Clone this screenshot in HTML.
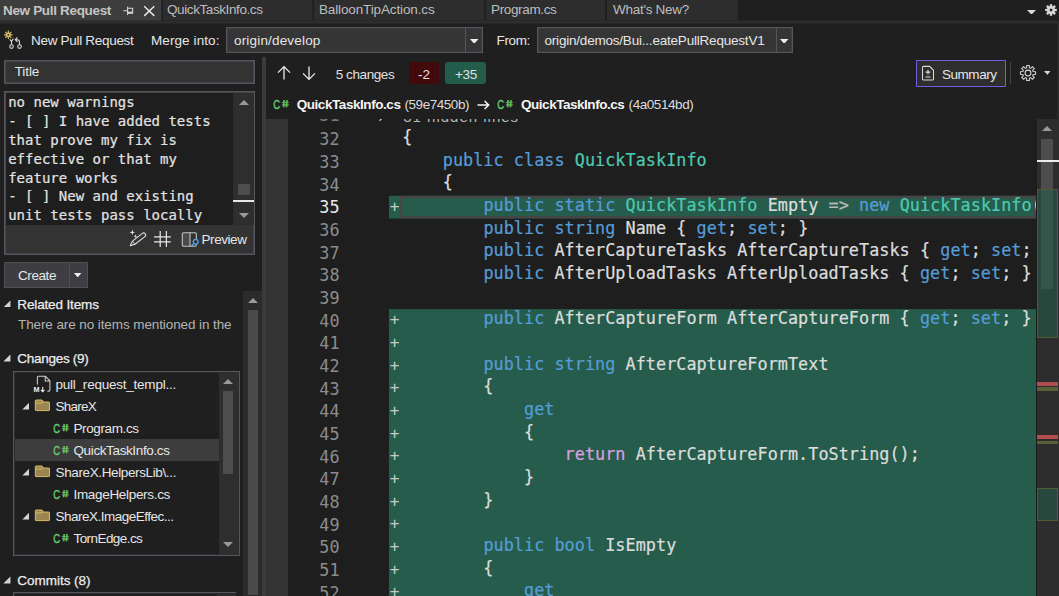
<!DOCTYPE html>
<html lang="en"><head><meta charset="utf-8"><title>New Pull Request</title><style>
html,body{margin:0;padding:0}
body{width:1059px;height:596px;overflow:hidden;background:#1f1f1f;position:relative;font-family:"Liberation Sans",sans-serif;-webkit-font-smoothing:antialiased}
.a{position:absolute;display:block}
.t{position:absolute;white-space:pre;line-height:20px;font-family:"Liberation Sans",sans-serif}
.m{position:absolute;white-space:pre;font-family:"DejaVu Sans Mono","Liberation Mono",monospace}
.ln{left:0;width:73.6px;text-align:right;font-size:16.8px;line-height:22.66px;letter-spacing:0.011px}
.cl{left:95.55px;font-size:16.8px;line-height:22.66px;letter-spacing:0.049px;color:#dcdcdc;-webkit-text-stroke:0.22px currentColor}
</style></head>
<body>
<svg class="a" style="left:0;top:0" width="1059" height="25" viewBox="0 0 1059 25"><rect x="0" y="20.6" width="1057.7" height="3" fill="#2d2d2d"/><rect x="0" y="0" width="161.3" height="20.5" fill="#3d3d3d"/><rect x="163" y="0" width="149.4" height="20.4" fill="#2d2d2d"/><rect x="314.2" y="0" width="170.1" height="20.4" fill="#2d2d2d"/><rect x="486.1" y="0" width="119.1" height="20.4" fill="#2d2d2d"/><rect x="607" y="0" width="130.8" height="20.4" fill="#2d2d2d"/></svg>
<span class="t" style="left:3.00px;top:0.93px;font-size:13.5px;letter-spacing:-0.330px;color:#c4c4c4;font-weight:bold;">New Pull Request</span>
<span class="t" style="left:167.00px;top:0.23px;font-size:13.5px;letter-spacing:-0.408px;color:#bdbdbd;">QuickTaskInfo.cs</span>
<span class="t" style="left:319.00px;top:0.23px;font-size:13.5px;letter-spacing:-0.135px;color:#bdbdbd;">BalloonTipAction.cs</span>
<span class="t" style="left:491.00px;top:0.23px;font-size:13.5px;letter-spacing:-0.352px;color:#bdbdbd;">Program.cs</span>
<span class="t" style="left:613.00px;top:0.23px;font-size:13.5px;letter-spacing:-0.282px;color:#bdbdbd;">What&#x27;s New?</span>
<svg class="a" style="left:122px;top:5px" width="12" height="12" viewBox="0 0 12 12"><path d="M1.3 5.8H5.6M5.6 1.8V10M5.6 3.2H10.6V8.2H5.6" fill="none" stroke="#d4d4d4" stroke-width="1.1"/><path d="M5.6 7.5H10.6" stroke="#d4d4d4" stroke-width="1.7"/></svg>
<svg class="a" style="left:143px;top:5px" width="13" height="12" viewBox="0 0 13 12"><path d="M1.2 1.3L11.3 10.9M11.3 1.3L1.2 10.9" fill="none" stroke="#e8e8e8" stroke-width="1.45"/></svg>
<svg class="a" style="left:1026.5px;top:9.7px" width="9" height="4.6" viewBox="0 0 9 4.6"><path d="M0 0H9L4.5 4.6Z" fill="#d8d8d8"/></svg>
<svg class="a" style="left:1045px;top:4px" width="12" height="12" viewBox="-6 -6 12 12"><g fill="#d8d8d8"><rect x="-1.15" y="-5.8" width="2.3" height="11.6" transform="rotate(0)"/><rect x="-1.15" y="-5.8" width="2.3" height="11.6" transform="rotate(45)"/><rect x="-1.15" y="-5.8" width="2.3" height="11.6" transform="rotate(90)"/><rect x="-1.15" y="-5.8" width="2.3" height="11.6" transform="rotate(135)"/><circle r="3.9"/></g><rect x="-1.25" y="-1.25" width="2.5" height="2.5" fill="#1f1f1f"/></svg>
<div class="a" style="left:1056.8px;top:21px;width:2.2000000000000455px;height:98px;background:#2a2a2a;"></div>
<span class="t" style="left:31.00px;top:31.13px;font-size:13.5px;letter-spacing:-0.300px;color:#e6e6e6;">New Pull Request</span>
<span class="t" style="left:151.00px;top:31.13px;font-size:13.5px;letter-spacing:0.088px;color:#e6e6e6;">Merge into:</span>
<div class="a" style="left:226px;top:26.7px;width:257px;height:26.400000000000002px;background:#353535;box-shadow:inset 0 0 0 1.3px #56555f;"></div>
<div class="a" style="left:465px;top:28px;width:1px;height:24px;background:#56545e;"></div>
<span class="t" style="left:234.00px;top:30.63px;font-size:13.5px;letter-spacing:0.174px;color:#e6e6e6;">origin/develop</span>
<svg class="a" style="left:470.1px;top:38.6px" width="8.4" height="4.8" viewBox="0 0 8.4 4.8"><path d="M0 0H8.4L4.2 4.8Z" fill="#f0f0f0"/></svg>
<span class="t" style="left:496.50px;top:31.13px;font-size:13.5px;letter-spacing:-0.349px;color:#e6e6e6;">From:</span>
<div class="a" style="left:537px;top:26.7px;width:256.29999999999995px;height:26.400000000000002px;background:#353535;box-shadow:inset 0 0 0 1.3px #56555f;"></div>
<div class="a" style="left:776px;top:28px;width:1px;height:24px;background:#56545e;"></div>
<span class="t" style="left:544.50px;top:30.63px;font-size:13.5px;letter-spacing:-0.205px;color:#e6e6e6;">origin/demos/Bui...eatePullRequestV1</span>
<svg class="a" style="left:780.3px;top:38.6px" width="8.4" height="4.8" viewBox="0 0 8.4 4.8"><path d="M0 0H8.4L4.2 4.8Z" fill="#f0f0f0"/></svg>
<svg class="a" style="left:0px;top:26px" width="32" height="30" viewBox="0 0 32 30"><g stroke="#dcc06e" stroke-width="1.15" fill="none"><path d="M8.3 4.5V13.1M4 8.8H12.6M5.3 5.8L11.3 11.8M11.3 5.8L5.3 11.8"/></g><circle cx="8.3" cy="8.8" r="2.3" fill="#dcc06e"/><circle cx="8.3" cy="8.8" r="0.9" fill="#2a2618"/><g stroke="#dadada" stroke-width="1.1" fill="none"><circle cx="11.5" cy="20.6" r="1.8"/><circle cx="19.5" cy="20.6" r="1.8"/><path d="M11.5 18.8V15.2M11.5 15.4L9.7 13.3M11.5 15.4L13.4 12.5M19.5 18.8V16.2Q19.5 13.7 17.3 13.7H15.6M17.4 11.4L15.3 13.7L17.4 15.8"/></g></svg>
<div class="a" style="left:4px;top:60px;width:251.4px;height:24.200000000000003px;background:#333333;box-shadow:inset 0 0 0 1.6px #56555f;"></div>
<span class="t" style="left:14.70px;top:61.63px;font-size:13.5px;letter-spacing:-0.101px;color:#e6e6e6;">Title</span>
<div class="a" style="left:4px;top:91px;width:251.4px;height:164.4px;background:#333333;box-shadow:inset 0 0 0 1.6px #56555f;"></div>
<div class="a" style="left:5.6px;top:92.6px;width:227.4px;height:132.4px;background:#1e1e1e;"></div>
<div class="a" style="left:233px;top:92.6px;width:20.80000000000001px;height:132.4px;background:#2e2e2e;"></div>
<span class="m" style="left:8.2px;top:92.90px;font-size:14px;line-height:19px;color:#e2e2e2;letter-spacing:0.005px;-webkit-text-stroke:0.2px currentColor">no new warnings</span>
<span class="m" style="left:8.2px;top:111.80px;font-size:14px;line-height:19px;color:#e2e2e2;letter-spacing:0.005px;-webkit-text-stroke:0.2px currentColor">- [ ] I have added tests</span>
<span class="m" style="left:8.2px;top:130.70px;font-size:14px;line-height:19px;color:#e2e2e2;letter-spacing:0.005px;-webkit-text-stroke:0.2px currentColor">that prove my fix is</span>
<span class="m" style="left:8.2px;top:149.60px;font-size:14px;line-height:19px;color:#e2e2e2;letter-spacing:0.005px;-webkit-text-stroke:0.2px currentColor">effective or that my</span>
<span class="m" style="left:8.2px;top:168.50px;font-size:14px;line-height:19px;color:#e2e2e2;letter-spacing:0.005px;-webkit-text-stroke:0.2px currentColor">feature works</span>
<span class="m" style="left:8.2px;top:187.40px;font-size:14px;line-height:19px;color:#e2e2e2;letter-spacing:0.005px;-webkit-text-stroke:0.2px currentColor">- [ ] New and existing</span>
<span class="m" style="left:8.2px;top:206.30px;font-size:14px;line-height:19px;color:#e2e2e2;letter-spacing:0.005px;-webkit-text-stroke:0.2px currentColor">unit tests pass locally</span>
<svg class="a" style="left:238.6px;top:99.5px" width="10" height="5" viewBox="0 0 10 5"><path d="M0 5H10L5.0 0Z" fill="#999999"/></svg>
<svg class="a" style="left:238.6px;top:212.8px" width="10" height="5" viewBox="0 0 10 5"><path d="M0 0H10L5.0 5Z" fill="#999999"/></svg>
<div class="a" style="left:237.7px;top:184px;width:12.300000000000011px;height:11px;background:#4d4d4d;"></div>
<div class="a" style="left:233px;top:200px;width:21px;height:2.3000000000000114px;background:#e8e8e8;"></div>
<svg class="a" style="left:128px;top:229px" width="20" height="20" viewBox="0 0 20 20"><path d="M2.3 16.6L4.5 12.1L14.36 4.43A2 2 0 0 1 16.84 7.57L7 15.3Z" fill="none" stroke="#dcdcdc" stroke-width="1.1" stroke-linejoin="round"/><path d="M4.6 12.2L6.9 15.2" fill="none" stroke="#dcdcdc" stroke-width="0.9"/><path d="M4.30 0.60L4.95 2.75L7.10 3.40L4.95 4.05L4.30 6.20L3.65 4.05L1.50 3.40L3.65 2.75Z" fill="#e6e6e6"/><path d="M7.50 5.20L7.97 6.73L9.50 7.20L7.97 7.67L7.50 9.20L7.03 7.67L5.50 7.20L7.03 6.73Z" fill="#e6e6e6"/></svg>
<svg class="a" style="left:154px;top:231px" width="17" height="16" viewBox="0 0 17 16"><path d="M6.2 0V16M12.4 0V16M0 5.8H16.8M0 10.8H16.8" fill="none" stroke="#e8e8e8" stroke-width="1.2"/></svg>
<svg class="a" style="left:181px;top:231px" width="19" height="17" viewBox="0 0 19 17"><g fill="none"><rect x="1.8" y="2.2" width="7.2" height="12.6" fill="#4a4a4a"/><rect x="1.3" y="1.75" width="14" height="13.5" rx="1.3" stroke="#c8c8c8" stroke-width="1.05"/><path d="M9 1.75V15.25" stroke="#c8c8c8" stroke-width="1.05"/><circle cx="14.7" cy="10.7" r="2.4" fill="#333333" stroke="#4aa3f0" stroke-width="1.3"/><path d="M13 12.5L10 15.5" stroke="#4aa3f0" stroke-width="1.5"/></g></svg>
<span class="t" style="left:201.50px;top:229.63px;font-size:13.5px;letter-spacing:-0.431px;color:#e6e6e6;">Preview</span>
<div class="a" style="left:4px;top:262px;width:84px;height:26px;background:#3d3d42;box-shadow:inset 0 0 0 1px #4f4f55;"></div>
<div class="a" style="left:69px;top:263px;width:1px;height:24px;background:#4f4f55;"></div>
<span class="t" style="left:18.00px;top:266.33px;font-size:13.5px;letter-spacing:-0.420px;color:#e6e6e6;">Create</span>
<svg class="a" style="left:74.3px;top:272.6px" width="7.4" height="4.4" viewBox="0 0 7.4 4.4"><path d="M0 0H7.4L3.7 4.4Z" fill="#f0f0f0"/></svg>
<div class="a" style="left:243px;top:291px;width:19px;height:305px;background:#2b2b2b;"></div>
<svg class="a" style="left:247.8px;top:298.3px" width="10" height="5" viewBox="0 0 10 5"><path d="M0 5H10L5.0 0Z" fill="#999999"/></svg>
<div class="a" style="left:248px;top:310px;width:10px;height:285px;background:#4a4a4a;"></div>
<div class="a" style="left:262px;top:56.5px;width:4px;height:539.5px;background:#3a3a3a;"></div>
<svg class="a" style="left:3px;top:299.5px" width="7.8" height="7.8" viewBox="0 0 8 8"><path d="M7.6 0.4V7.6H0.4Z" fill="#d4d4d4"/></svg>
<span class="t" style="left:17.30px;top:294.53px;font-size:13.5px;letter-spacing:-0.138px;color:#ececec;-webkit-text-stroke:0.25px currentColor;">Related Items</span>
<span class="t" style="left:18.00px;top:315.33px;font-size:13.5px;letter-spacing:-0.096px;color:#b4b4b4;">There are no items mentioned in the</span>
<svg class="a" style="left:3px;top:354.09999999999997px" width="7.8" height="7.8" viewBox="0 0 8 8"><path d="M7.6 0.4V7.6H0.4Z" fill="#d4d4d4"/></svg>
<span class="t" style="left:17.30px;top:348.93px;font-size:13.5px;letter-spacing:-0.281px;color:#ececec;-webkit-text-stroke:0.25px currentColor;">Changes (9)</span>
<svg class="a" style="left:3px;top:576.3px" width="7.8" height="7.8" viewBox="0 0 8 8"><path d="M7.6 0.4V7.6H0.4Z" fill="#d4d4d4"/></svg>
<span class="t" style="left:17.30px;top:571.13px;font-size:13.5px;letter-spacing:-0.027px;color:#ececec;-webkit-text-stroke:0.25px currentColor;">Commits (8)</span>
<div class="a" style="left:13.2px;top:591.8px;width:223.3px;height:8.200000000000045px;background:#1f1f1f;box-shadow:inset 0 0 0 1.3px #56555f;"></div>
<div class="a" style="left:217px;top:593px;width:18.5px;height:7px;background:#2b2b2b;"></div>
<div class="a" style="left:13.2px;top:370.5px;width:226.5px;height:185.5px;background:#1f1f1f;box-shadow:inset 0 0 0 1.3px #56555f;"></div>
<div class="a" style="left:219px;top:371.5px;width:19.5px;height:183.0px;background:#2e2e2e;"></div>
<svg class="a" style="left:223.3px;top:379.3px" width="10" height="5" viewBox="0 0 10 5"><path d="M0 5H10L5.0 0Z" fill="#999999"/></svg>
<svg class="a" style="left:223.3px;top:541.7px" width="10" height="5" viewBox="0 0 10 5"><path d="M0 0H10L5.0 5Z" fill="#999999"/></svg>
<div class="a" style="left:223.3px;top:391px;width:9.699999999999989px;height:83px;background:#4d4d4d;"></div>
<div class="a" style="left:15px;top:439px;width:204.4px;height:22px;background:#3d3d3d;"></div>
<span class="t" style="left:55.50px;top:374.63px;font-size:13.5px;letter-spacing:-0.230px;color:#e6e6e6;">pull_request_templ...</span>
<svg class="a" style="left:33px;top:375.0px" width="19" height="19" viewBox="0 0 19 19"><path d="M4.4 9.6V2.4Q4.4 1.3 5.5 1.3H12.4L16.9 5.8V15Q16.9 16.1 15.8 16.1H14.4M12.2 1.5V6H16.7" fill="none" stroke="#cfcfcf" stroke-width="1.05"/><text x="0.6" y="17.4" font-family="Liberation Sans, sans-serif" font-size="7.2" font-weight="bold" fill="#f0f0f0">M</text><path d="M9.7 12V16.6M7.9 14.9L9.7 16.8L11.5 14.9" fill="none" stroke="#f0f0f0" stroke-width="1.1"/></svg>
<span class="t" style="left:55.50px;top:396.73px;font-size:13.5px;letter-spacing:-0.755px;color:#e6e6e6;">ShareX</span>
<svg class="a" style="left:21.6px;top:401.9px" width="7.8" height="7.8" viewBox="0 0 8 8"><path d="M7.6 0.4V7.6H0.4Z" fill="#d4d4d4"/></svg>
<svg class="a" style="left:34.4px;top:398.90000000000003px" width="16.6" height="12.8" viewBox="0 0 17 14"><path d="M0.9 1.9Q0.9 1.1 1.7 1.1H8.2L9.8 3.3H15.6Q16.4 3.3 16.4 4.1V11.9Q16.4 12.7 15.6 12.7H1.7Q0.9 12.7 0.9 11.9Z" fill="#9c8650" stroke="#e4c46e" stroke-width="1"/><path d="M1 4.4H7.6L9.6 3.3" fill="none" stroke="#e4c46e" stroke-width="0.9"/></svg>
<span class="t" style="left:73.50px;top:418.83px;font-size:13.5px;letter-spacing:-0.382px;color:#e6e6e6;">Program.cs</span>
<svg class="a" style="left:52.8px;top:421.7px" width="18" height="13" viewBox="0 0 18 13"><text x="0.2" y="10.75" font-family="Liberation Sans, sans-serif" font-size="12.5" textLength="6.9" lengthAdjust="spacingAndGlyphs" fill="#6ac76e" stroke="#6ac76e" stroke-width="0.4">C</text><text x="0" y="0" transform="translate(9.5 9.15) skewX(11)" font-family="Liberation Sans, sans-serif" font-size="9.9" font-weight="bold" textLength="6.9" lengthAdjust="spacingAndGlyphs" fill="#6ac76e" stroke="#6ac76e" stroke-width="0.35">#</text></svg>
<span class="t" style="left:73.50px;top:440.83px;font-size:13.5px;letter-spacing:-0.377px;color:#e6e6e6;">QuickTaskInfo.cs</span>
<svg class="a" style="left:52.8px;top:443.7px" width="18" height="13" viewBox="0 0 18 13"><text x="0.2" y="10.75" font-family="Liberation Sans, sans-serif" font-size="12.5" textLength="6.9" lengthAdjust="spacingAndGlyphs" fill="#6ac76e" stroke="#6ac76e" stroke-width="0.4">C</text><text x="0" y="0" transform="translate(9.5 9.15) skewX(11)" font-family="Liberation Sans, sans-serif" font-size="9.9" font-weight="bold" textLength="6.9" lengthAdjust="spacingAndGlyphs" fill="#6ac76e" stroke="#6ac76e" stroke-width="0.35">#</text></svg>
<span class="t" style="left:55.50px;top:462.93px;font-size:13.5px;letter-spacing:-0.372px;color:#e6e6e6;">ShareX.HelpersLib\...</span>
<svg class="a" style="left:21.6px;top:468.09999999999997px" width="7.8" height="7.8" viewBox="0 0 8 8"><path d="M7.6 0.4V7.6H0.4Z" fill="#d4d4d4"/></svg>
<svg class="a" style="left:34.4px;top:465.1px" width="16.6" height="12.8" viewBox="0 0 17 14"><path d="M0.9 1.9Q0.9 1.1 1.7 1.1H8.2L9.8 3.3H15.6Q16.4 3.3 16.4 4.1V11.9Q16.4 12.7 15.6 12.7H1.7Q0.9 12.7 0.9 11.9Z" fill="#9c8650" stroke="#e4c46e" stroke-width="1"/><path d="M1 4.4H7.6L9.6 3.3" fill="none" stroke="#e4c46e" stroke-width="0.9"/></svg>
<span class="t" style="left:73.50px;top:485.13px;font-size:13.5px;letter-spacing:-0.319px;color:#e6e6e6;">ImageHelpers.cs</span>
<svg class="a" style="left:52.8px;top:488px" width="18" height="13" viewBox="0 0 18 13"><text x="0.2" y="10.75" font-family="Liberation Sans, sans-serif" font-size="12.5" textLength="6.9" lengthAdjust="spacingAndGlyphs" fill="#6ac76e" stroke="#6ac76e" stroke-width="0.4">C</text><text x="0" y="0" transform="translate(9.5 9.15) skewX(11)" font-family="Liberation Sans, sans-serif" font-size="9.9" font-weight="bold" textLength="6.9" lengthAdjust="spacingAndGlyphs" fill="#6ac76e" stroke="#6ac76e" stroke-width="0.35">#</text></svg>
<span class="t" style="left:55.50px;top:507.13px;font-size:13.5px;letter-spacing:-0.504px;color:#e6e6e6;">ShareX.ImageEffec...</span>
<svg class="a" style="left:21.6px;top:512.3px" width="7.8" height="7.8" viewBox="0 0 8 8"><path d="M7.6 0.4V7.6H0.4Z" fill="#d4d4d4"/></svg>
<svg class="a" style="left:34.4px;top:509.3px" width="16.6" height="12.8" viewBox="0 0 17 14"><path d="M0.9 1.9Q0.9 1.1 1.7 1.1H8.2L9.8 3.3H15.6Q16.4 3.3 16.4 4.1V11.9Q16.4 12.7 15.6 12.7H1.7Q0.9 12.7 0.9 11.9Z" fill="#9c8650" stroke="#e4c46e" stroke-width="1"/><path d="M1 4.4H7.6L9.6 3.3" fill="none" stroke="#e4c46e" stroke-width="0.9"/></svg>
<span class="t" style="left:73.50px;top:529.33px;font-size:13.5px;letter-spacing:-0.567px;color:#e6e6e6;">TornEdge.cs</span>
<svg class="a" style="left:52.8px;top:532.2px" width="18" height="13" viewBox="0 0 18 13"><text x="0.2" y="10.75" font-family="Liberation Sans, sans-serif" font-size="12.5" textLength="6.9" lengthAdjust="spacingAndGlyphs" fill="#6ac76e" stroke="#6ac76e" stroke-width="0.4">C</text><text x="0" y="0" transform="translate(9.5 9.15) skewX(11)" font-family="Liberation Sans, sans-serif" font-size="9.9" font-weight="bold" textLength="6.9" lengthAdjust="spacingAndGlyphs" fill="#6ac76e" stroke="#6ac76e" stroke-width="0.35">#</text></svg>
<svg class="a" style="left:276px;top:65px" width="16" height="16" viewBox="0 0 16 16"><path d="M8 14.5V1.8M2 7.6L8 1.6L14 7.6" fill="none" stroke="#ececec" stroke-width="1.3"/></svg>
<svg class="a" style="left:300.6px;top:65px" width="16" height="16" viewBox="0 0 16 16"><path d="M8 1.5V14.2M2 8.4L8 14.4L14 8.4" fill="none" stroke="#ececec" stroke-width="1.3"/></svg>
<span class="t" style="left:335.70px;top:65.13px;font-size:13.5px;letter-spacing:-0.411px;color:#e0e0e0;">5 changes</span>
<div class="a" style="left:409px;top:62.3px;width:30px;height:22.200000000000003px;background:#420a0a;border-radius:3px;"></div>
<span class="t" style="left:418.00px;top:65.13px;font-size:13.5px;letter-spacing:-0.002px;color:#e0e0e0;">-2</span>
<div class="a" style="left:445.3px;top:62.3px;width:40.69999999999999px;height:22.200000000000003px;background:#245c4b;border-radius:3px;"></div>
<span class="t" style="left:455.00px;top:65.13px;font-size:13.5px;letter-spacing:-0.300px;color:#e0e0e0;">+35</span>
<div class="a" style="left:916px;top:60px;width:90px;height:27px;background:#2e2e2e;box-shadow:inset 0 0 0 1px #6f5fe0;border-radius:1px;"></div>
<svg class="a" style="left:920.7px;top:64.6px" width="14" height="16.4" viewBox="0 0 15 17"><g fill="none" stroke="#dcdcdc" stroke-width="1.1"><path d="M1.6 2.4Q1.6 1.2 2.8 1.2H9.2L13.4 5.4V14.6Q13.4 15.8 12.2 15.8H2.8Q1.6 15.8 1.6 14.6Z"/><path d="M7.5 4.8V10M4.9 7.4H10.1M4.9 12.6H10.1" stroke-width="1.2"/></g></svg>
<span class="t" style="left:942.00px;top:65.13px;font-size:13.5px;letter-spacing:-0.465px;color:#e6e6e6;">Summary</span>
<div class="a" style="left:1009.7px;top:62px;width:1.0px;height:21.700000000000003px;background:#444444;"></div>
<svg class="a" style="left:1019px;top:64.1px" width="18" height="18" viewBox="-9 -9 18 18"><path d="M-1.30 -7.59L1.30 -7.59L1.41 -5.11L2.61 -4.61L4.45 -6.29L6.29 -4.45L4.61 -2.61L5.11 -1.41L7.59 -1.30L7.59 1.30L5.11 1.41L4.61 2.61L6.29 4.45L4.45 6.29L2.61 4.61L1.41 5.11L1.30 7.59L-1.30 7.59L-1.41 5.11L-2.61 4.61L-4.45 6.29L-6.29 4.45L-4.61 2.61L-5.11 1.41L-7.59 1.30L-7.59 -1.30L-5.11 -1.41L-4.61 -2.61L-6.29 -4.45L-4.45 -6.29L-2.61 -4.61L-1.41 -5.11Z" fill="none" stroke="#d8d8d8" stroke-width="1.05" stroke-linejoin="round"/><circle r="2.9" fill="none" stroke="#d8d8d8" stroke-width="1.05"/></svg>
<svg class="a" style="left:1043.5px;top:71.0px" width="6.6" height="3.8" viewBox="0 0 6.6 3.8"><path d="M0 0H6.6L3.3 3.8Z" fill="#d8d8d8"/></svg>
<svg class="a" style="left:272.8px;top:98px" width="18" height="13" viewBox="0 0 18 13"><text x="0.2" y="10.75" font-family="Liberation Sans, sans-serif" font-size="12.5" textLength="6.9" lengthAdjust="spacingAndGlyphs" fill="#6ac76e" stroke="#6ac76e" stroke-width="0.4">C</text><text x="0" y="0" transform="translate(9.5 9.15) skewX(11)" font-family="Liberation Sans, sans-serif" font-size="9.9" font-weight="bold" textLength="6.9" lengthAdjust="spacingAndGlyphs" fill="#6ac76e" stroke="#6ac76e" stroke-width="0.35">#</text></svg>
<span class="t" style="left:296.70px;top:95.13px;font-size:13.5px;letter-spacing:-0.437px;color:#f4f4f4;font-weight:bold;">QuickTaskInfo.cs</span>
<span class="t" style="left:404.50px;top:95.13px;font-size:13.5px;letter-spacing:-0.456px;color:#dcdcdc;">(59e7450b)</span>
<svg class="a" style="left:476.5px;top:100px" width="13" height="10" viewBox="0 0 13 10"><path d="M0.5 5H11.5M7.6 1L11.7 5L7.6 9" fill="none" stroke="#f4f4f4" stroke-width="1.55"/></svg>
<svg class="a" style="left:496.5px;top:98px" width="18" height="13" viewBox="0 0 18 13"><text x="0.2" y="10.75" font-family="Liberation Sans, sans-serif" font-size="12.5" textLength="6.9" lengthAdjust="spacingAndGlyphs" fill="#6ac76e" stroke="#6ac76e" stroke-width="0.4">C</text><text x="0" y="0" transform="translate(9.5 9.15) skewX(11)" font-family="Liberation Sans, sans-serif" font-size="9.9" font-weight="bold" textLength="6.9" lengthAdjust="spacingAndGlyphs" fill="#6ac76e" stroke="#6ac76e" stroke-width="0.35">#</text></svg>
<span class="t" style="left:521.00px;top:95.13px;font-size:13.5px;letter-spacing:-0.468px;color:#f4f4f4;font-weight:bold;">QuickTaskInfo.cs</span>
<span class="t" style="left:628.60px;top:95.13px;font-size:13.5px;letter-spacing:-0.436px;color:#dcdcdc;">(4a0514bd)</span>
<div class="a" style="left:266px;top:118.6px;width:793px;height:477.4px;overflow:hidden;background:#1e1e1e"><div class="a" style="left:0;top:0;width:22px;height:477px;background:#333333"></div><svg class="a" style="left:0;top:0" width="793" height="478" viewBox="0 0 793 478"><rect x="122.9" y="76.80" width="648" height="22.66" fill="#255c4b"/><rect x="122.9" y="190.10" width="648" height="317.24" fill="#255c4b"/><rect x="135.15" y="78.00" width="633.7" height="20.26" fill="none" stroke="#464646" stroke-width="2.4"/></svg><span class="m ln" style="top:9.82px;color:#8c8c8c">32</span><span class="m cl" style="top:7.42px">    {</span><span class="m ln" style="top:32.48px;color:#8c8c8c">33</span><span class="m cl" style="top:30.08px">        <span style="color:#569cd6">public</span> <span style="color:#569cd6">class</span> <span style="color:#4ec9b0">QuickTaskInfo</span></span><span class="m ln" style="top:55.14px;color:#8c8c8c">34</span><span class="m cl" style="top:52.74px">        {</span><span class="m ln" style="top:77.80px;color:#e8e8e8">35</span><span class="m" style="left:123.8px;top:77.40px;font-size:16px;line-height:22.66px;color:#c8c8c8">+</span><span class="m cl" style="top:75.40px">            <span style="color:#569cd6">public</span> <span style="color:#569cd6">static</span> <span style="color:#4ec9b0">QuickTaskInfo</span> Empty <span style="color:#b8b8b8">=&gt;</span> <span style="color:#569cd6">new</span> <span style="color:#4ec9b0">QuickTaskInfo</span>();</span><span class="m ln" style="top:100.46px;color:#8c8c8c">36</span><span class="m cl" style="top:98.06px">            <span style="color:#569cd6">public</span> <span style="color:#569cd6">string</span> Name { <span style="color:#569cd6">get</span>; <span style="color:#569cd6">set</span>; }</span><span class="m ln" style="top:123.12px;color:#8c8c8c">37</span><span class="m cl" style="top:120.72px">            <span style="color:#569cd6">public</span> AfterCaptureTasks AfterCaptureTasks { <span style="color:#569cd6">get</span>; <span style="color:#569cd6">set</span>; }</span><span class="m ln" style="top:145.78px;color:#8c8c8c">38</span><span class="m cl" style="top:143.38px">            <span style="color:#569cd6">public</span> AfterUploadTasks AfterUploadTasks { <span style="color:#569cd6">get</span>; <span style="color:#569cd6">set</span>; }</span><span class="m ln" style="top:168.44px;color:#8c8c8c">39</span><span class="m ln" style="top:191.10px;color:#8c8c8c">40</span><span class="m" style="left:123.8px;top:190.70px;font-size:16px;line-height:22.66px;color:#c8c8c8">+</span><span class="m cl" style="top:188.70px">            <span style="color:#569cd6">public</span> AfterCaptureForm AfterCaptureForm { <span style="color:#569cd6">get</span>; <span style="color:#569cd6">set</span>; }</span><span class="m ln" style="top:213.76px;color:#8c8c8c">41</span><span class="m" style="left:123.8px;top:213.36px;font-size:16px;line-height:22.66px;color:#c8c8c8">+</span><span class="m ln" style="top:236.42px;color:#8c8c8c">42</span><span class="m" style="left:123.8px;top:236.02px;font-size:16px;line-height:22.66px;color:#c8c8c8">+</span><span class="m cl" style="top:234.02px">            <span style="color:#569cd6">public</span> <span style="color:#569cd6">string</span> AfterCaptureFormText</span><span class="m ln" style="top:259.08px;color:#8c8c8c">43</span><span class="m" style="left:123.8px;top:258.68px;font-size:16px;line-height:22.66px;color:#c8c8c8">+</span><span class="m cl" style="top:256.68px">            {</span><span class="m ln" style="top:281.74px;color:#8c8c8c">44</span><span class="m" style="left:123.8px;top:281.34px;font-size:16px;line-height:22.66px;color:#c8c8c8">+</span><span class="m cl" style="top:279.34px">                <span style="color:#569cd6">get</span></span><span class="m ln" style="top:304.40px;color:#8c8c8c">45</span><span class="m" style="left:123.8px;top:304.00px;font-size:16px;line-height:22.66px;color:#c8c8c8">+</span><span class="m cl" style="top:302.00px">                {</span><span class="m ln" style="top:327.06px;color:#8c8c8c">46</span><span class="m" style="left:123.8px;top:326.66px;font-size:16px;line-height:22.66px;color:#c8c8c8">+</span><span class="m cl" style="top:324.66px">                    <span style="color:#d8a0df">return</span> AfterCaptureForm.ToString();</span><span class="m ln" style="top:349.72px;color:#8c8c8c">47</span><span class="m" style="left:123.8px;top:349.32px;font-size:16px;line-height:22.66px;color:#c8c8c8">+</span><span class="m cl" style="top:347.32px">                }</span><span class="m ln" style="top:372.38px;color:#8c8c8c">48</span><span class="m" style="left:123.8px;top:371.98px;font-size:16px;line-height:22.66px;color:#c8c8c8">+</span><span class="m cl" style="top:369.98px">            }</span><span class="m ln" style="top:395.04px;color:#8c8c8c">49</span><span class="m" style="left:123.8px;top:394.64px;font-size:16px;line-height:22.66px;color:#c8c8c8">+</span><span class="m ln" style="top:417.70px;color:#8c8c8c">50</span><span class="m" style="left:123.8px;top:417.30px;font-size:16px;line-height:22.66px;color:#c8c8c8">+</span><span class="m cl" style="top:415.30px">            <span style="color:#569cd6">public</span> <span style="color:#569cd6">bool</span> IsEmpty</span><span class="m ln" style="top:440.36px;color:#8c8c8c">51</span><span class="m" style="left:123.8px;top:439.96px;font-size:16px;line-height:22.66px;color:#c8c8c8">+</span><span class="m cl" style="top:437.96px">            {</span><span class="m ln" style="top:463.02px;color:#8c8c8c">52</span><span class="m" style="left:123.8px;top:462.62px;font-size:16px;line-height:22.66px;color:#c8c8c8">+</span><span class="m cl" style="top:460.62px">                <span style="color:#569cd6">get</span></span><span class="m ln" style="top:485.68px;color:#8c8c8c">53</span><span class="m" style="left:123.8px;top:485.28px;font-size:16px;line-height:22.66px;color:#c8c8c8">+</span><span class="m cl" style="top:483.28px">                {</span><span class="m ln" style="top:-14.14px;color:#7a7a7a">31</span><svg class="a" style="left:112px;top:-8.30px" width="8" height="12" viewBox="0 0 8 12"><path d="M1.5 0.8L6.3 5.8L1.5 10.8" fill="none" stroke="#c8c8c8" stroke-width="1.3"/></svg><span class="t" style="left:137.2px;top:-11.94px;font-size:15px;letter-spacing:1.0px;color:#b8b8b8">31 hidden lines</span><div class="a" style="left:770.4px;top:0;width:23px;height:478px;background:#2d2d2d"></div><div class="a" style="left:769.6px;top:0;width:1px;height:478px;background:#1b1b1b"></div><div class="a" style="left:774.8px;top:20.6px;width:12.7px;height:150.3px;background:#4d4d4d"></div><div class="a" style="left:770.5px;top:41.20000000000002px;width:22px;height:2.2px;background:#ececec"></div><div class="a" style="left:770.5px;top:70.7px;width:21px;height:149.0px;background:rgba(36,92,75,0.55);box-shadow:inset 0 0 0 1px #4f5b31"></div><div class="a" style="left:770.5px;top:369.4px;width:21px;height:32.7px;background:rgba(36,92,75,0.55);box-shadow:inset 0 0 0 1px #4f5b31"></div><div class="a" style="left:770.5px;top:263.1px;width:21px;height:4.2px;background:#b34d4d"></div><div class="a" style="left:770.5px;top:268.7px;width:21px;height:3.8px;background:#5b6136"></div><div class="a" style="left:770.5px;top:316.4px;width:21px;height:4.2px;background:#b34d4d"></div><div class="a" style="left:770.5px;top:322.0px;width:21px;height:3.8px;background:#5b6136"></div><svg class="a" style="left:775.8px;top:7.400000000000006px" width="10" height="5" viewBox="0 0 10 5"><path d="M0 5H10L5 0Z" fill="#999999"/></svg></div>
</body></html>
